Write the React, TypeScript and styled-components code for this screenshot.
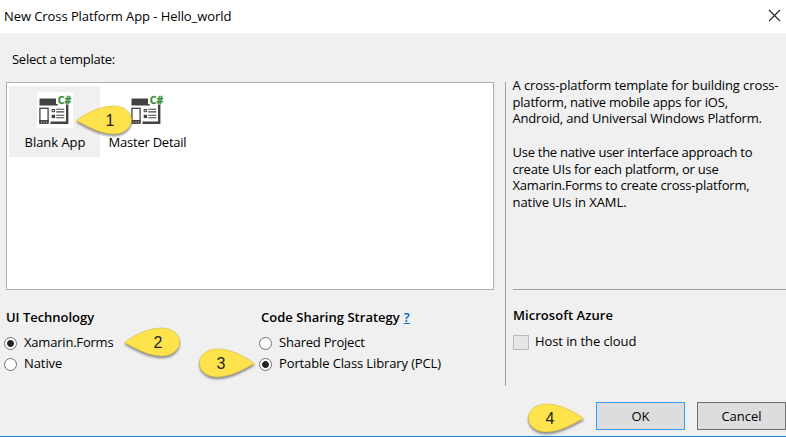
import React from "react";
import styled, { createGlobalStyle } from "styled-components";

const GlobalStyle = createGlobalStyle`
  *, *::before, *::after { box-sizing: border-box; }
  html, body { margin: 0; padding: 0; background: #f0f0f0; overflow: hidden; }
`;

const Dialog = styled.div`
  position: relative;
  display: flex;
  flex-direction: column;
  width: 786px;
  height: 437px;
  overflow: hidden;
  background: #f0f0f0;
  border-bottom: 1px solid #1883d7;
  color: #000;
  font: 400 13px/17px "Open Sans", "Noto Sans", sans-serif;
`;

const Label = styled.span<{ $track?: number }>`
  display: block;
  white-space: nowrap;
  letter-spacing: ${({ $track = 0 }) => $track}px;
`;

const TitleBar = styled.header`
  display: flex;
  justify-content: space-between;
  height: 33px;
  padding: 8px 5px 0 4px;
  background: #fff;
`;

const CloseButton = styled.button`
  display: flex;
  width: 13px;
  height: 13px;
  margin-top: 1px;
  padding: 0;
  border: 0;
  background: none;
`;

const Content = styled.main`
  display: grid;
  grid-template-columns: 499px 1fr;
  height: 353px;
`;

const MainPane = styled.section`
  display: flex;
  flex-direction: column;
  padding: 18px 5px 0 6px;
`;

const Prompt = styled.div`
  height: 31px;
  padding-left: 6px;
`;

const TemplateList = styled.div`
  display: flex;
  align-items: flex-start;
  height: 208px;
  padding: 3px 2px;
  border: 1px solid #abadb9;
  background: #fff;
`;

const TemplateItem = styled.div<{ $selected?: boolean }>`
  display: flex;
  flex-direction: column;
  align-items: center;
  width: ${({ $selected }) => ($selected ? 91 : 94)}px;
  height: 71px;
  padding-top: 6px;
  background: ${({ $selected }) => ($selected ? "#f0f0f0" : "#fff")};
`;

const IconTile = styled.div`
  width: 36px;
  height: 36px;
  margin-bottom: 6px;
  background: #fff;
`;

const TemplateName = styled.div`
  padding-left: 1px;
`;

const Options = styled.div`
  display: grid;
  grid-template-columns: 255px 1fr;
  padding-top: 19px;
`;

const OptionGroup = styled.div`
  display: flex;
  flex-direction: column;
`;

const Heading = styled.h2`
  display: flex;
  gap: 4px;
  height: 25px;
  margin: 0;
  font-size: 13px;
  font-weight: 600;
  line-height: 17px;
`;

const HelpLink = styled.a`
  color: #0066cc;
  text-decoration: underline;
`;

const RadioRow = styled.label<{ $indent?: number }>`
  display: flex;
  gap: 7px;
  height: 20.5px;
  margin-left: -2px;
`;

const Radio = styled.span<{ $checked?: boolean }>`
  flex: none;
  width: 13px;
  height: 13px;
  margin-top: 3px;
  border: 1px solid #707070;
  border-radius: 50%;
  background: ${({ $checked }) =>
    $checked ? "radial-gradient(circle, #222 3px, #fff 3.8px)" : "#fff"};
`;

const SidePane = styled.aside`
  display: flex;
  flex-direction: column;
  height: 304px;
  margin: 49px 0 0 6px;
  padding: 0 0 0 7px;
  border-left: 1px solid #a0a0a0;
`;

const Description = styled.div`
  height: 208px;
  border-bottom: 1px solid #a0a0a0;
`;

const Paragraph = styled.p`
  margin: 0 0 16.7px -0.5px;
  line-height: 16.7px;
  transform: translateY(-5px);
`;

const Azure = styled.div`
  display: flex;
  flex-direction: column;
  padding-top: 17px;
`;

const CheckRow = styled.label`
  display: flex;
  gap: 6px;
  padding-top: 1px;
`;

const Checkbox = styled.span`
  width: 16px;
  height: 15px;
  margin-top: 2px;
  border: 1px solid #bcbcbc;
  background: #e6e6e6;
`;

const Footer = styled.footer`
  display: flex;
  justify-content: flex-end;
  gap: 12px;
  padding-top: 16px;
`;

const PushButton = styled.button<{ $primary?: boolean }>`
  display: flex;
  justify-content: center;
  width: 89px;
  height: 28px;
  padding: 5px 0 0;
  border: 1px solid ${({ $primary }) => ($primary ? "#3399ff" : "#707070")};
  background: #ddd;
  color: #000;
  font: inherit;
`;

const Callout = styled.div<{ $x: number; $y: number }>`
  position: absolute;
  left: ${({ $x }) => $x}px;
  top: ${({ $y }) => $y}px;
  width: 60px;
  height: 36px;
`;

const CalloutShape = styled.svg<{ $flip?: boolean }>`
  display: block;
  transform: ${({ $flip }) => ($flip ? "scaleX(-1)" : "none")};
  filter: drop-shadow(0 2px 1px rgba(0, 0, 0, 0.42));
`;

const CalloutNumber = styled.span<{ $flip?: boolean }>`
  position: absolute;
  top: 6px;
  left: ${({ $flip }) => ($flip ? 15 : 25)}px;
  width: 20px;
  color: #222;
  font: 16px/20px "Liberation Sans", Arial, sans-serif;
  text-align: center;
`;

function Marker({ n, x, y, flip }: { n: number; x: number; y: number; flip?: boolean }) {
  return (
    <Callout $x={x} $y={y}>
      <CalloutShape $flip={flip} width="60" height="36" viewBox="0 0 60 36">
        <path
          d="M1.5 15.5C10 9 25 1 38.5 1C49 1 56.5 7 56.5 15C56.5 23 49 29 38.5 29C25 29 10 20 1.5 15.5Z"
          fill="#ffe34d"
          stroke="#d5ba3c"
          strokeWidth="0.6"
        />
      </CalloutShape>
      <CalloutNumber $flip={flip}>{n}</CalloutNumber>
    </Callout>
  );
}

const IconText = styled.text`
  font: 700 10px "Open Sans", sans-serif;
  letter-spacing: 0;
`;

function TemplateIcon() {
  return (
    <IconTile>
      <svg width="36" height="36" viewBox="0 0 36 36">
        <path d="M2.5 6.5H19V12H20.7V13.5H2.5Z" fill="#424242" />
        <path d="M30.2 12.5V30.8H13.5" fill="none" stroke="#424242" strokeWidth="2.4" />
        <rect x="2.9" y="16.3" width="8.2" height="14.8" fill="#fff" stroke="#424242" strokeWidth="1.3" />
        <path d="M2.5 29.8H11.5" stroke="#424242" strokeWidth="3.6" />
        <path d="M4.2 30H5.2M6.6 30H7.6M9 30H10" stroke="#fff" strokeWidth="0.9" />
        <rect x="15.2" y="17.5" width="2.4" height="2.2" fill="none" stroke="#424242" />
        <rect x="14.7" y="22.7" width="3.4" height="3.4" fill="#424242" />
        <path d="M19.3 17.3H27.3M19.3 19.9H27.3M19.3 23.2H27.3M19.3 25.8H27.3" stroke="#424242" strokeWidth="1.1" />
        <IconText x="20.8" y="11.6" fill="#389038" stroke="#389038" strokeWidth="0.3" textLength="13.4" lengthAdjust="spacingAndGlyphs">
          C#
        </IconText>
      </svg>
    </IconTile>
  );
}

const lines: [string, number][][] = [
  [
    ["A cross-platform template for building cross-", -0.095],
    ["platform, native mobile apps for iOS,", -0.185],
    ["Android, and Universal Windows Platform.", -0.175],
  ],
  [
    ["Use the native user interface approach to", -0.265],
    ["create UIs for each platform, or use", -0.233],
    ["Xamarin.Forms to create cross-platform,", -0.194],
    ["native UIs in XAML.", -0.064],
  ],
];

export default function App() {
  return (
    <>
      <GlobalStyle />
      <Dialog>
        <TitleBar>
          <Label $track={-0.075}>New Cross Platform App - Hello_world</Label>
          <CloseButton aria-label="Close">
            <svg width="13" height="13" viewBox="0 0 13 13">
              <path d="M1 1L12 12M12 1L1 12" stroke="#222" strokeWidth="1.1" />
            </svg>
          </CloseButton>
        </TitleBar>
        <Content>
          <MainPane>
            <Prompt>
              <Label $track={-0.26}>Select a template:</Label>
            </Prompt>
            <TemplateList>
              <TemplateItem $selected>
                <TemplateIcon />
                <TemplateName>
                  <Label $track={-0.05}>Blank App</Label>
                </TemplateName>
              </TemplateItem>
              <TemplateItem>
                <TemplateIcon />
                <TemplateName>
                  <Label $track={-0.24}>Master Detail</Label>
                </TemplateName>
              </TemplateItem>
            </TemplateList>
            <Options>
              <OptionGroup>
                <Heading>
                  <Label $track={-0.03}>UI Technology</Label>
                </Heading>
                <RadioRow>
                  <Radio $checked />
                  <Label $track={-0.2}>Xamarin.Forms</Label>
                </RadioRow>
                <RadioRow>
                  <Radio />
                  <Label $track={-0.08}>Native</Label>
                </RadioRow>
              </OptionGroup>
              <OptionGroup>
                <Heading>
                  <Label $track={0.02}>Code Sharing Strategy</Label>
                  <HelpLink>?</HelpLink>
                </Heading>
                <RadioRow>
                  <Radio />
                  <Label $track={-0.22}>Shared Project</Label>
                </RadioRow>
                <RadioRow>
                  <Radio $checked />
                  <Label $track={-0.122}>Portable Class Library (PCL)</Label>
                </RadioRow>
              </OptionGroup>
            </Options>
          </MainPane>
          <SidePane>
            <Description>
              {lines.map((group, i) => (
                <Paragraph key={i}>
                  {group.map(([text, track]) => (
                    <Label key={text} $track={track}>{text}</Label>
                  ))}
                </Paragraph>
              ))}
            </Description>
            <Azure>
              <Heading>
                <Label $track={0.05}>Microsoft Azure</Label>
              </Heading>
              <CheckRow>
                <Checkbox />
                <Label $track={-0.09}>Host in the cloud</Label>
              </CheckRow>
            </Azure>
          </SidePane>
        </Content>
        <Footer>
          <PushButton $primary>
            <Label>OK</Label>
          </PushButton>
          <PushButton>
            <Label>Cancel</Label>
          </PushButton>
        </Footer>
        <Marker n={1} x={75} y={105} />
        <Marker n={2} x={123} y={327} />
        <Marker n={3} x={196} y={348} flip />
        <Marker n={4} x={525} y={403} flip />
      </Dialog>
    </>
  );
}
